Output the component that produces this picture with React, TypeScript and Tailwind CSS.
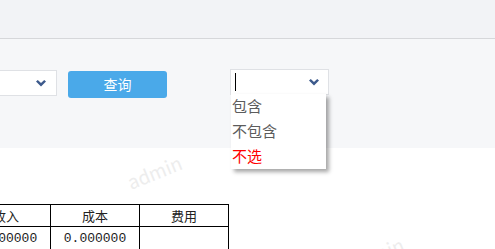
import React from "react";

function Chevron() {
  return (
    <svg width="10" height="7" viewBox="0 0 10 7" className="shrink-0">
      <path d="M0 1.6 L1.8 0 L5 2.9 L8.2 0 L10 1.6 L5 6.6 Z" fill="#3d5a8c" />
    </svg>
  );
}

const options = [
  { label: "包含", color: "text-[#5c5c5c]" },
  { label: "不包含", color: "text-[#5c5c5c]" },
  { label: "不选", color: "text-[#ff0000]" },
];

export default function App() {
  return (
    <div
      className="relative h-[249px] w-[495px] overflow-hidden bg-white"
      style={{ fontFamily: '"Noto Sans CJK SC", "Noto Sans", sans-serif' }}
    >
      <div className="h-[39px] border-b border-[#d6d7da] bg-[#f2f3f6]" />

      <div className="flex h-[109px] items-start bg-[#f6f7f9] pt-[31px]">
        <div className="-ml-[93px] flex h-[26px] w-[150px] items-center justify-end border border-[#dfe1e5] bg-white pr-[10px]">
          <Chevron />
        </div>
        <button className="ml-[11px] mt-[1px] flex h-[27px] w-[99px] items-center justify-center rounded-[3px] bg-[#4aa9e9] text-[14px] text-white">
          查询
        </button>
        <div className="relative -mt-[1px] ml-[63px]">
          <div className="flex h-[26px] w-[99px] items-center justify-between border border-[#dfe1e5] bg-white pl-[4px] pr-[9px]">
            <span className="h-[18px] w-px bg-black" />
            <Chevron />
          </div>
          <div className="absolute left-[1px] top-[25px] z-10 w-[95px] bg-white shadow-[3px_3px_4px_rgba(0,0,0,0.35)]">
            {options.map((o) => (
              <div key={o.label} className={`flex h-[25px] items-center pl-[1px] text-[15px] ${o.color}`}>
                {o.label}
              </div>
            ))}
          </div>
        </div>
      </div>

      <div className="pointer-events-none absolute left-[126px] top-[158px] -rotate-[22deg] text-[19px] text-[#ededed]">
        admin
      </div>
      <div className="pointer-events-none absolute left-[348px] top-[240px] -rotate-[22deg] text-[19px] text-[#ededed]">
        admin
      </div>

      <table className="-ml-[39px] mt-[56px] border-collapse text-[13px] text-[#222]">
        <tbody>
          <tr className="h-[22px]">
            {["收入", "成本", "费用"].map((h) => (
              <td key={h} className="w-[89px] border border-black p-0 text-center leading-none">
                {h}
              </td>
            ))}
          </tr>
          <tr className="h-[24px]">
            {["0.000000", "0.000000", ""].map((v, i) => (
              <td
                key={i}
                className="w-[89px] border border-black p-0 text-center leading-none"
                style={{ fontFamily: '"Liberation Mono", monospace' }}
              >
                {v}
              </td>
            ))}
          </tr>
        </tbody>
      </table>
    </div>
  );
}
